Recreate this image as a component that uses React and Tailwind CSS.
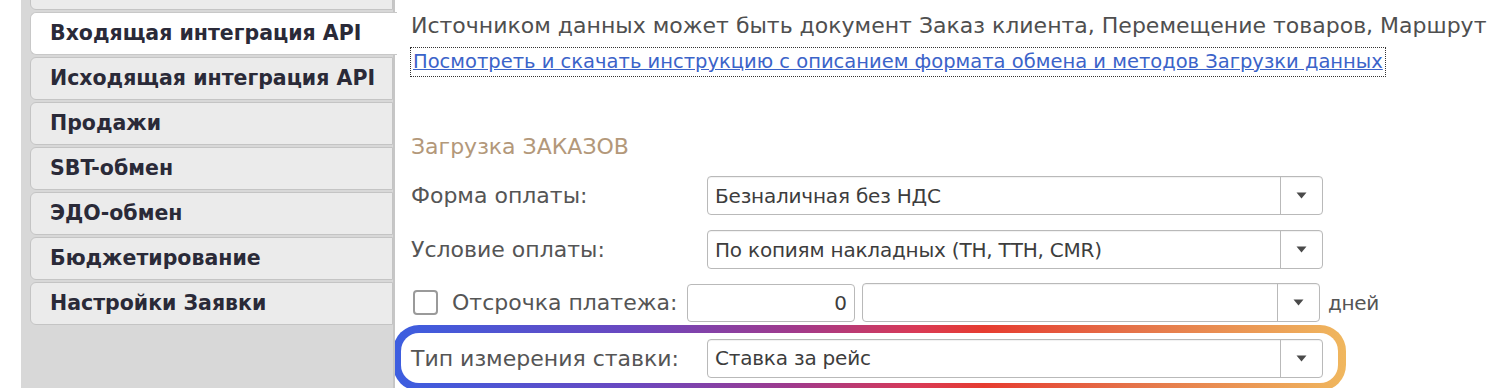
import React from 'react';

const tabs = [
  { label: '', active: false },
  { label: 'Входящая интеграция API', active: true },
  { label: 'Исходящая интеграция API', active: false },
  { label: 'Продажи', active: false },
  { label: 'SBT-обмен', active: false },
  { label: 'ЭДО-обмен', active: false },
  { label: 'Бюджетирование', active: false },
  { label: 'Настройки Заявки', active: false },
];

const font = { fontFamily: '"DejaVu Sans", Verdana, sans-serif' };

function Arrow() {
  return (
    <svg width="11" height="7" viewBox="0 0 11 7">
      <path d="M0.5 0.5 L10.5 0.5 L5.5 6.5 Z" fill="#4a4a4a" />
    </svg>
  );
}

function Combo({ value, className }) {
  return (
    <div className={`flex h-[39px] border border-[#b9b9b9] rounded-[4px] bg-white shadow-[inset_0_1px_1px_rgba(0,0,0,0.06)] ${className}`}>
      <div className="flex-1 flex items-center pl-[7px] text-[20px] text-[#3d3d3d] tracking-[-0.2px] whitespace-nowrap overflow-hidden">
        {value}
      </div>
      <div className="w-[42px] border-l border-[#b9b9b9] flex items-center justify-center">
        <Arrow />
      </div>
    </div>
  );
}

function Label({ children, className = '' }) {
  return (
    <div className={`text-[22px] text-[#555555] whitespace-nowrap ${className}`}>{children}</div>
  );
}

export default function App() {
  return (
    <div className="flex w-[1492px] h-[388px] overflow-hidden bg-white" style={font}>
      <div className="w-[21px] shrink-0 bg-white" />
      <aside className="w-[374px] shrink-0 bg-[#d8d8d8] border-r-2 border-[#c6c6c6] pl-[9px] relative z-10">
        <div className="-mt-[33px] flex flex-col gap-[2px]">
          {tabs.map((t, i) => (
            <div
              key={i}
              className={
                t.active
                  ? 'h-[43px] -mr-[4px] bg-white border border-r-0 border-[#c8c8c8] rounded-l-[6px] flex items-center pl-[19px]'
                  : 'h-[43px] bg-[#ebebeb] border border-[#c4c4c4] rounded-l-[6px] flex items-center pl-[19px]'
              }
            >
              <span className="text-[20.5px] font-bold text-[#2a2a38] whitespace-nowrap">{t.label}</span>
            </div>
          ))}
        </div>
      </aside>

      <main className="flex-1 pl-[16px] pt-[11px]">
        <div className="h-[30px] leading-[30px] text-[22px] text-[#4f4f4f] whitespace-nowrap">
          Источником данных может быть документ Заказ клиента, Перемещение товаров, Маршрут
        </div>
        <div className="mt-[6px] -ml-[1px]">
          <a className="inline-block h-[30px] leading-[28px] border border-dotted border-[#333] px-[2px] text-[19.5px] text-[#3b63c9] underline whitespace-nowrap">
            Посмотреть и скачать инструкцию с описанием формата обмена и методов Загрузки данных
          </a>
        </div>

        <div className="mt-[56px] h-[28px] leading-[28px] text-[22px] text-[#b3987a]">Загрузка ЗАКАЗОВ</div>

        <div className="mt-[15px] flex items-center">
          <Label className="w-[296px]">Форма оплаты:</Label>
          <Combo value="Безналичная без НДС" className="w-[616px]" />
        </div>
        <div className="mt-[15px] flex items-center">
          <Label className="w-[296px]">Условие оплаты:</Label>
          <Combo value="По копиям накладных (ТН, ТТН, CMR)" className="w-[616px]" />
        </div>

        <div className="mt-[14px] flex items-center">
          <div className="w-[25px] h-[25px] ml-[2px] border-2 border-[#9a9a9a] rounded-[4px] bg-white" />
          <Label className="ml-[14px] w-[235px]">Отсрочка платежа:</Label>
          <div className="w-[168px] h-[38px] border border-[#b9b9b9] rounded-[4px] flex items-center justify-end pr-[7px] text-[20px] text-[#3d3d3d]">
            0
          </div>
          <Combo value="" className="ml-[7px] w-[458px]" />
          <div className="ml-[8px] text-[20px] text-[#555555] tracking-[-0.3px]">дней</div>
        </div>

        <div className="mt-[3px] -ml-[18px] w-[953px] h-[66px] p-[8px] rounded-[26px] bg-[linear-gradient(90deg,#3c5ee0_0%,#6a48c0_25%,#a03a8c_42%,#d93a56_55%,#e63c30_62%,#e5744a_78%,#f0b75e_100%)]">
          <div className="h-full bg-white rounded-[18px] flex items-center pl-[10px]">
            <Label className="w-[296px]">Тип измерения ставки:</Label>
            <Combo value="Ставка за рейс" className="w-[616px]" />
          </div>
        </div>
      </main>
    </div>
  );
}
